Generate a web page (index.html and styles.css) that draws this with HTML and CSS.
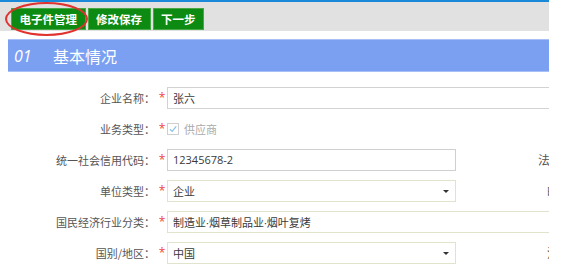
FILE: index.html
```html
<!DOCTYPE html>
<html lang="zh">
<head>
<meta charset="utf-8">
<link rel="stylesheet" href="styles.css">
</head>
<body>
<div class="page">
  <div class="toolbar">
    <button class="btn">电子件管理</button>
    <button class="btn">修改保存</button>
    <button class="btn">下一步</button>
    <span class="mark"></span>
  </div>
  <div class="section-head"><span class="num">01</span><span class="title">基本情况</span></div>
  <div class="form">
    <div class="row">
      <label class="lbl">企业名称：</label><span class="star">*</span>
      <div class="field wide"><span class="val">张六</span></div>
    </div>
    <div class="row">
      <label class="lbl">业务类型：</label><span class="star">*</span>
      <div class="check-wrap"><span class="check"><svg width="10" height="10" viewBox="0 0 10 10"><path d="M2 5.2 L4.2 7.4 L8.2 2.4" fill="none" stroke="#8cc4ea" stroke-width="1.3"/></svg></span><span class="check-text">供应商</span></div>
    </div>
    <div class="row">
      <label class="lbl">统一社会信用代码：</label><span class="star">*</span>
      <div class="field plain"><span class="val">12345678-2</span></div>
      <label class="rlbl">法定代表人：</label>
    </div>
    <div class="row">
      <label class="lbl">单位类型：</label><span class="star">*</span>
      <div class="field sel"><span class="val">企业</span><span class="arrow"></span></div>
      <label class="rlbl short">邮政编码：</label>
    </div>
    <div class="row">
      <label class="lbl">国民经济行业分类：</label><span class="star">*</span>
      <div class="field wide sel"><span class="val">制造业·烟草制品业·烟叶复烤</span></div>
    </div>
    <div class="row">
      <label class="lbl">国别/地区：</label><span class="star">*</span>
      <div class="field sel"><span class="val">中国</span><span class="arrow"></span></div>
      <label class="rlbl short">注册地址：</label>
    </div>
  </div>
</div>
</body>
</html>
```
FILE: styles.css
```css
* { box-sizing: border-box; }
html, body { margin: 0; padding: 0; background: #fff; }
body { font-family: "Open Sans", "Noto Sans CJK SC", sans-serif; }
.page { width: 549px; height: 264px; overflow: hidden; position: relative; }
.toolbar {
  border-top: 2px solid #1a8ad8;
  background: #e1e1e1;
  height: 31px;
  padding: 6px 0 0 11px;
  display: flex;
  gap: 2px;
  align-items: flex-start;
  position: relative;
}
.btn {
  height: 22px;
  margin: 0;
  padding: 0 7.5px;
  background: #0c8a12;
  border: 1px solid #46a846;
  color: #fff;
  font-family: "Noto Sans CJK SC", sans-serif;
  font-weight: bold;
  font-size: 11.5px;
  line-height: 20px;
}
.mark {
  position: absolute;
  left: 5px;
  top: 0px;
  width: 83px;
  height: 34px;
  border: 2px solid #e0322f;
  border-radius: 50%;
}
.section-head {
  margin: 8px 0 0 8px;
  height: 33px;
  background: #7ba0f2;
  border-top: 1px solid #a9c0f7;
  border-bottom: 1px solid #a9c0f7;
  display: flex;
  align-items: center;
  color: #fff;
}
.num { font-style: italic; font-size: 16px; margin-left: 6px; width: 39px; font-family: "Open Sans", sans-serif; }
.title { font-size: 16px; font-family: "Noto Sans CJK SC", sans-serif; }
.form { padding-top: 10px; }
.row {
  display: grid;
  grid-template-columns: 155px 12px 289px 154px 200px;
  height: 31px;
  align-items: center;
}
.lbl {
  text-align: right;
  font-size: 11px;
  color: #555;
  font-family: "Noto Sans CJK SC", sans-serif;
  white-space: nowrap;
}
.rlbl {
  text-align: right;
  font-size: 12px;
  color: #555;
  font-family: "Noto Sans CJK SC", sans-serif;
  white-space: nowrap;
}
.rlbl.short { padding-right: 3px; }
.star { color: #ee4444; font-size: 12px; text-align: center; padding-left: 2px; }
.field {
  height: 22px;
  border: 1px solid #d2d2d2;
  display: flex;
  align-items: center;
  padding-left: 5px;
  position: relative;
  background: #fff;
}
.field.wide { grid-column: 3 / 6; }
.field.sel { border-color: #e1e4cc; }
.field.plain { border-color: #cfcfcf; }
.val { font-size: 11px; color: #3a3a3a; white-space: nowrap; font-family: "Open Sans", "Noto Sans CJK SC", sans-serif; }
.arrow {
  position: absolute;
  right: 6px;
  top: 9px;
  border-left: 3px solid transparent;
  border-right: 3px solid transparent;
  border-top: 3px solid #333;
}
.check-wrap { display: flex; align-items: center; }
.check {
  width: 12px; height: 12px;
  border: 1px solid #cfcfcf;
  display: flex; align-items: center; justify-content: center;
  background: #fff;
}
.check-text { margin-left: 5px; font-size: 11px; color: #aaa; font-family: "Noto Sans CJK SC", sans-serif; }
```
